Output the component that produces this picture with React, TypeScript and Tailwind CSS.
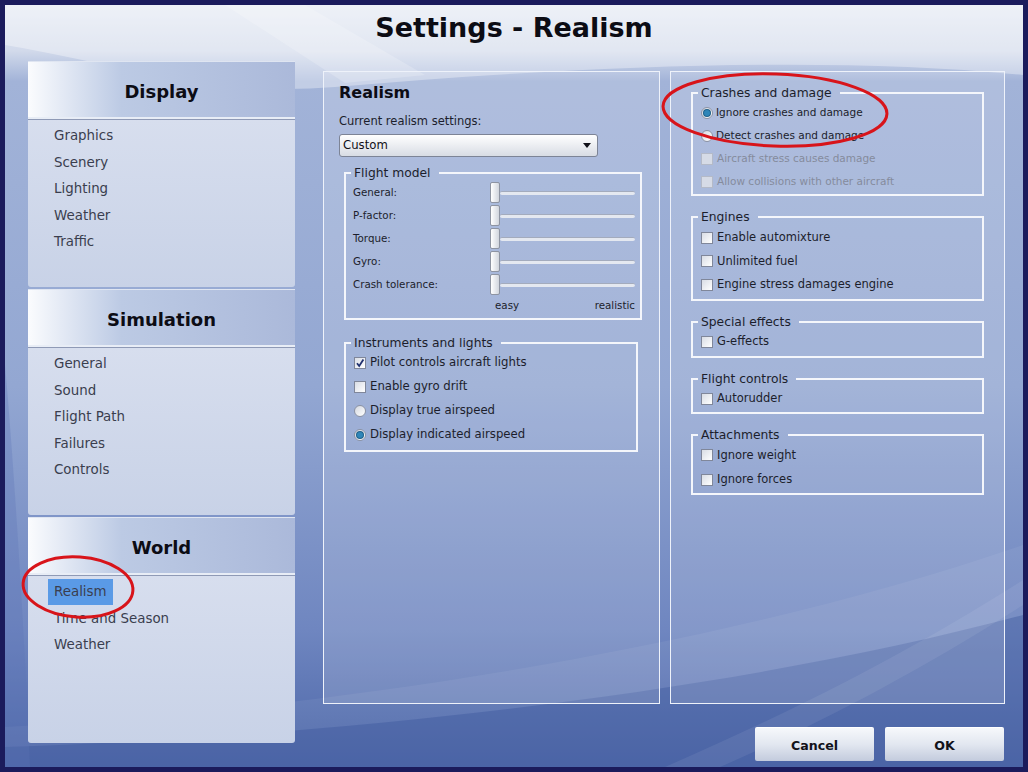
import React from 'react'

const FONT = "font-['DejaVu_Sans',sans-serif]"

function CheckBox({ checked, disabled }: { checked?: boolean; disabled?: boolean }) {
    return (
        <span
            className={`relative inline-flex w-[12px] h-[12px] shrink-0 border ${disabled ? 'border-[#b4bac8] bg-[#d6dbe6]' : 'border-[#80879a] bg-gradient-to-br from-[#d9dde5] to-[#ffffff]'}`}
        >
            {checked && (
                <svg viewBox="0 0 12 12" className="absolute -left-px -top-px w-[12px] h-[12px]">
                    <path d="M3 6.2 L5.2 9 L9.4 2.6" fill="none" stroke="#20306e" strokeWidth="1.8" />
                </svg>
            )}
        </span>
    )
}

function Radio({ checked }: { checked?: boolean }) {
    return (
        <span className="inline-flex w-[12px] h-[12px] shrink-0 rounded-full border border-[#8c93a4] bg-gradient-to-br from-[#d4d8e0] to-[#ffffff] items-center justify-center">
            {checked && <span className="w-[6px] h-[6px] rounded-full bg-[#2f86b8] ring-1 ring-[#1e5f8a]" />}
        </span>
    )
}

function Group({ title, className, children }: { title: string; className?: string; children: React.ReactNode }) {
    return (
        <fieldset className={`border-2 border-[#f4f6fb] ${className ?? ''}`}>
            <legend className="ml-[5px] pl-[3px] pr-[8px] leading-[16px] text-[12.3px] text-[#1c1e2c]">{title}</legend>
            {children}
        </fieldset>
    )
}

function Slider() {
    return (
        <div className="flex-1 flex items-center h-full">
            <div className="w-[10px] h-[21px] rounded-[2px] border border-[#8e94a2] bg-gradient-to-r from-[#ffffff] to-[#d2d6de] shrink-0" />
            <div className="flex-1 h-[4px] rounded-full bg-[#e4e8f0] border-t border-[#a3abbd]" />
        </div>
    )
}

const SECTIONS = [
    { title: 'Display', items: ['Graphics', 'Scenery', 'Lighting', 'Weather', 'Traffic'] },
    { title: 'Simulation', items: ['General', 'Sound', 'Flight Path', 'Failures', 'Controls'] },
    { title: 'World', items: ['Realism', 'Time and Season', 'Weather'] },
]

const SLIDERS = ['General:', 'P-factor:', 'Torque:', 'Gyro:', 'Crash tolerance:']

export default function App() {
    return (
        <div className={`relative w-[1028px] h-[772px] bg-[#1b1b5c] p-[5px] overflow-hidden ${FONT}`}>
            <div className="relative w-full h-full overflow-hidden">
                {/* background waves */}
                <svg className="absolute inset-0 w-full h-full" viewBox="0 0 1018 762" preserveAspectRatio="none">
                    <defs>
                        <linearGradient id="bg" x1="0" y1="0" x2="0" y2="1">
                            <stop offset="0" stopColor="#e4e9f3" />
                            <stop offset="0.06" stopColor="#d2daeb" />
                            <stop offset="0.1" stopColor="#a2b3d8" />
                            <stop offset="0.5" stopColor="#93a7d2" />
                            <stop offset="0.82" stopColor="#6f86c0" />
                            <stop offset="1" stopColor="#4c66a8" />
                        </linearGradient>
                    </defs>
                    <rect width="1018" height="762" fill="url(#bg)" />
                    <path d="M0 0 H1018 V70 C820 50 560 62 330 82 C200 92 120 60 0 40 Z" fill="#ffffff" opacity="0.35" />
                    <path d="M220 0 L300 0 L420 70 L340 78 Z" fill="#ffffff" opacity="0.2" />
                    <path d="M0 762 L0 722 C300 705 700 650 1018 540 L1018 762 Z" fill="#ffffff" opacity="0.06" />
                    <path d="M0 762 L0 742 C320 732 720 690 1018 610 L1018 762 Z" fill="#3a549c" opacity="0.4" />
                    <path d="M660 762 C790 705 900 650 1018 575 L1018 600 C900 675 800 725 715 762 Z" fill="#ffffff" opacity="0.07" />
                    <path d="M0 360 C8 450 18 600 25 762 L0 762 Z" fill="#5d74b6" opacity="0.3" />
                </svg>

                <div className="relative flex flex-col">
                    <div className="h-[44px] flex items-center justify-center">
                        <h1 className="text-[27px] font-bold text-[#0c0c14] leading-none">Settings - Realism</h1>
                    </div>

                    <div className="mt-[12px] pl-[23px] flex">
                        {/* sidebar */}
                        <div className="w-[267px] flex flex-col gap-[2px]">
                            {SECTIONS.map((s) => (
                                <div key={s.title} className="flex flex-col">
                                    <div className="h-[58px] pt-[3px] flex items-center justify-center border-t border-[#dfe5f1] border-b-2 border-b-[#e8edf6] bg-gradient-to-r from-[#fbfcfe] via-[#bccae4] via-35% to-[#abb9da]">
                                        <span className="text-[18px] font-bold text-[#0c0c14]">{s.title}</span>
                                    </div>
                                    <div className="h-[168px] border-t border-[#8f9ab6] rounded-b-[3px] bg-gradient-to-b from-[#d7deee] to-[#c8d2e7] pt-[3px]">
                                        {s.items.map((it) => (
                                            <div key={it} className="h-[26.5px] flex items-stretch pl-[20px]">
                                                <span
                                                    className={`px-[6px] flex items-center text-[13.4px] text-[#3a3e4e] ${s.title === 'World' && it === 'Realism' ? 'bg-[#5a9ae6] h-[26px]' : ''}`}
                                                >
                                                    {it}
                                                </span>
                                            </div>
                                        ))}
                                    </div>
                                </div>
                            ))}
                        </div>

                        {/* right side */}
                        <div className="ml-[28px] mt-[10px] flex flex-col">
                            <div className="flex gap-[10px] h-[633px]">
                                {/* middle panel */}
                                <div className="w-[337px] border border-[#eef2fa] bg-white/15 pl-[15px] pt-[10px]">
                                    <h2 className="text-[16px] font-bold leading-[22px] text-[#0c0c14]">Realism</h2>
                                    <p className="mt-[9px] text-[11.5px] leading-[16px] text-[#1c1e2c]">Current realism settings:</p>
                                    <div className="mt-[5px] w-[259px] h-[23px] rounded-[3px] border border-[#7d8496] bg-gradient-to-b from-[#ffffff] to-[#d8dce4] flex items-center justify-between pl-[3px] pr-[6px]">
                                        <span className="text-[11.7px] text-[#101018]">Custom</span>
                                        <svg viewBox="0 0 8 5" className="w-[8px] h-[5px]">
                                            <path d="M0 0 H8 L4 5 Z" fill="#101018" />
                                        </svg>
                                    </div>

                                    <Group title="Flight model" className="mt-[8px] ml-[5px] w-[298px]">
                                        {SLIDERS.map((l) => (
                                            <div key={l} className="h-[23px] flex items-center pl-[7px] pr-[5px]">
                                                <span className="w-[137px] text-[10.3px] text-[#1c1e2c]">{l}</span>
                                                <Slider />
                                            </div>
                                        ))}
                                        <div className="h-[22px] flex items-center justify-between pl-[149px] pr-[5px] pb-[2px] text-[10.3px] text-[#1c1e2c]">
                                            <span>easy</span>
                                            <span>realistic</span>
                                        </div>
                                    </Group>

                                    <Group title="Instruments and lights" className="mt-[15px] ml-[5px] w-[294px] pb-[3px]">
                                        {[
                                            { t: 'Pilot controls aircraft lights', k: 'c', on: true },
                                            { t: 'Enable gyro drift', k: 'c', on: false },
                                            { t: 'Display true airspeed', k: 'r', on: false },
                                            { t: 'Display indicated airspeed', k: 'r', on: true },
                                        ].map((r) => (
                                            <div key={r.t} className="h-[24px] flex items-center gap-[4px] pl-[8px] text-[11.7px] text-[#1c1e2c]">
                                                {r.k === 'c' ? <CheckBox checked={r.on} /> : <Radio checked={r.on} />}
                                                <span>{r.t}</span>
                                            </div>
                                        ))}
                                    </Group>
                                </div>

                                {/* right panel */}
                                <div className="w-[335px] border border-[#eef2fa] bg-white/15 pl-[20px] pt-[13px]">
                                    <Group title="Crashes and damage" className="w-[293px] pb-[1px]">
                                        <div className="h-[23px] flex items-center gap-[3px] pl-[8px] text-[10.5px] text-[#1c1e2c]">
                                            <Radio checked />
                                            <span>Ignore crashes and damage</span>
                                        </div>
                                        <div className="h-[23px] flex items-center gap-[3px] pl-[8px] text-[10.5px] text-[#1c1e2c]">
                                            <Radio />
                                            <span>Detect crashes and damage</span>
                                        </div>
                                        <div className="h-[23px] flex items-center gap-[4px] pl-[8px] text-[10.5px] text-[#858b9c]">
                                            <CheckBox disabled />
                                            <span>Aircraft stress causes damage</span>
                                        </div>
                                        <div className="h-[23px] flex items-center gap-[4px] pl-[8px] text-[10.5px] text-[#858b9c]">
                                            <CheckBox disabled />
                                            <span>Allow collisions with other aircraft</span>
                                        </div>
                                    </Group>

                                    <Group title="Engines" className="mt-[13px] w-[293px] pt-[1px] pb-[2.5px]">
                                        {['Enable automixture', 'Unlimited fuel', 'Engine stress damages engine'].map((t) => (
                                            <div key={t} className="h-[23.5px] flex items-center gap-[4px] pl-[8px] text-[11.5px] text-[#1c1e2c]">
                                                <CheckBox />
                                                <span>{t}</span>
                                            </div>
                                        ))}
                                    </Group>

                                    <Group title="Special effects" className="mt-[13px] w-[293px] pb-[3px]">
                                        <div className="h-[23px] flex items-center gap-[4px] pl-[8px] text-[11.5px] text-[#1c1e2c]">
                                            <CheckBox />
                                            <span>G-effects</span>
                                        </div>
                                    </Group>

                                    <Group title="Flight controls" className="mt-[13px] w-[293px] pb-[2px]">
                                        <div className="h-[23px] flex items-center gap-[4px] pl-[8px] text-[11.5px] text-[#1c1e2c]">
                                            <CheckBox />
                                            <span>Autorudder</span>
                                        </div>
                                    </Group>

                                    <Group title="Attachments" className="mt-[13px] w-[293px] pb-[1px]">
                                        {['Ignore weight', 'Ignore forces'].map((t) => (
                                            <div key={t} className="h-[24.5px] flex items-center gap-[4px] pl-[8px] text-[11.5px] text-[#1c1e2c]">
                                                <CheckBox />
                                                <span>{t}</span>
                                            </div>
                                        ))}
                                    </Group>
                                </div>
                            </div>

                            <div className="mt-[23px] flex justify-end gap-[11px] pr-[1px]">
                                {['Cancel', 'OK'].map((b) => (
                                    <button
                                        key={b}
                                        className="w-[119px] h-[34px] pt-[3px] rounded-[2px] border-t border-[#ffffff] bg-gradient-to-b from-[#f6f8fb] via-[#e2e7f0] to-[#c3cbdd] text-[12.6px] font-bold text-[#12121a]"
                                    >
                                        {b}
                                    </button>
                                ))}
                            </div>
                        </div>
                    </div>
                </div>
            </div>

            {/* red annotation circles */}
            <svg className="absolute left-0 top-0 w-[1028px] h-[772px] pointer-events-none" viewBox="0 0 1028 772">
                <ellipse cx="78" cy="587" rx="55" ry="30" fill="none" stroke="#d8141a" strokeWidth="3" transform="rotate(4 78 587)" />
                <ellipse cx="775" cy="110" rx="112" ry="36" fill="none" stroke="#d8141a" strokeWidth="3" transform="rotate(2 775 110)" />
            </svg>
        </div>
    )
}
